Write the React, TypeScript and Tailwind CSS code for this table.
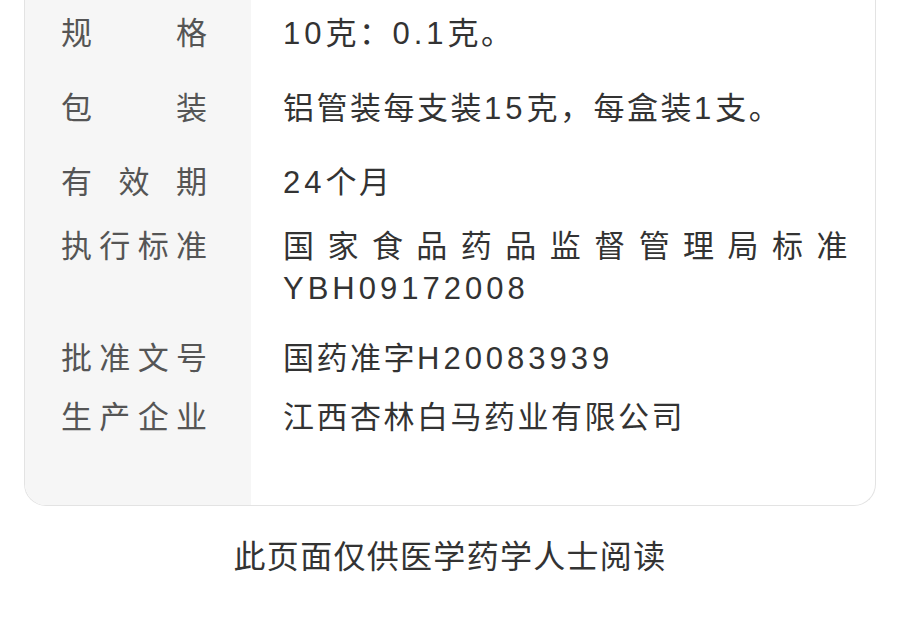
const rows: { label: string; value: string; mt: string }[] = [
  { label: '规格', value: '10克：0.1克。', mt: 'mt-[13px]' },
  { label: '包装', value: '铝管装每支装15克，每盒装1支。', mt: 'mt-[33px]' },
  { label: '有效期', value: '24个月', mt: 'mt-[32px]' },
  { label: '执行标准', value: '国家食品药品监督管理局标准YBH09172008', mt: 'mt-[22px]' },
  { label: '批准文号', value: '国药准字H20083939', mt: 'mt-[28px]' },
  { label: '生产企业', value: '江西杏林白马药业有限公司', mt: 'mt-[17px]' },
];

// latin runs are set a bit wider than the CJK text
function Value({ text }: { text: string }) {
  const parts = text.split(/([A-Za-z0-9.]+)/);
  return (
    <>
      {parts.map((p, i) =>
        /^[A-Za-z0-9.]+$/.test(p) ? (
          <span key={i} className="tracking-[4px]">
            {p}
          </span>
        ) : (
          <span key={i}>{p}</span>
        )
      )}
    </>
  );
}

export default function App() {
  return (
    <div
      className="w-[900px] h-[628px] bg-white overflow-hidden"
      style={{ fontFamily: '"Liberation Sans", "Noto Sans CJK SC", sans-serif' }}
    >
      {/* spec table card, top edge runs off the page */}
      <div className="mx-[24px] h-[506px] border border-t-0 border-[#e3e3e3] rounded-b-[22px] overflow-hidden flex">
        <div className="w-[226px] shrink-0 bg-[#f6f6f6]" />
        <div className="flex-1" />
      </div>
      <div className="relative -mt-[506px] h-[506px] mx-[24px]">
        <div className="flex flex-col">
          {rows.map((r) => (
            <div key={r.label} className={`flex ${r.mt}`}>
              <div className="w-[259px] shrink-0 pl-[37px]">
                <div className="w-[146px] text-[31px] leading-[42px] text-[#555] text-justify [text-align-last:justify]">
                  {r.label}
                </div>
              </div>
              <div className="w-[567px] text-[31px] leading-[42px] tracking-[2.5px] text-[#333] text-justify">
                <Value text={r.value} />
              </div>
            </div>
          ))}
        </div>
      </div>
      <div className="mt-[31px] text-center text-[32px] leading-[40px] tracking-[1.3px] text-[#333]">
        此页面仅供医学药学人士阅读
      </div>
    </div>
  );
}
